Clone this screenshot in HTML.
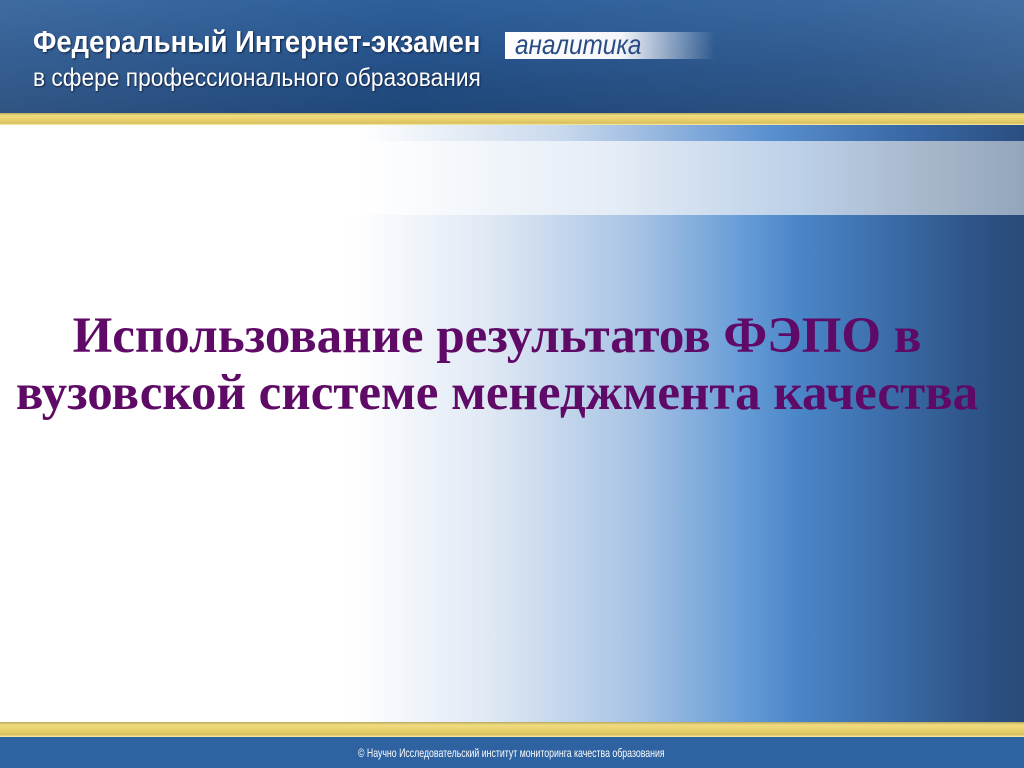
<!DOCTYPE html>
<html><head><meta charset="utf-8"><style>
body{margin:0;width:1024px;height:768px;overflow:hidden;position:relative;font-family:"Liberation Sans",sans-serif;}
div{position:absolute;}
#hdr{left:0;top:0;width:1024px;height:113px;background:linear-gradient(180deg,#2e5f9a 0%,#25528a 50%,#1e4678 100%);}
#hdr2{left:0;top:0;width:1024px;height:113px;background:linear-gradient(90deg,rgba(255,255,255,0.08),rgba(255,255,255,0) 40%,rgba(255,255,255,0.05) 80%,rgba(255,255,255,0.1));}
.yel{left:0;width:1024px;background:linear-gradient(180deg,#b8a860 0%,#f0dc80 20%,#e6ce6a 60%,#d8c060 85%,#f8f0b0 100%);}
#band{left:0;top:125px;width:1024px;height:16px;background:linear-gradient(90deg,#fff 0%,#fff 35%,#c8d8ec 55%,#5a90d0 75%,#3a6aa8 88%,#2a4e80 100%);}
#light{left:0;top:141px;width:1024px;height:74px;background:linear-gradient(90deg,#fff 0%,#fff 35%,#e4ecf6 60%,#bcd0e8 78%,#a8b8cc 90%,#94a6bc 100%);}
#main{left:0;top:215px;width:1024px;height:507px;background:linear-gradient(90deg,#fff 0%,#fff 34%,#dfe8f4 48%,#a8c4e4 62%,#6a9ed8 72%,#4a86c8 78%,#3b6ca8 87%,#2e5488 95%,#2a4a78 100%);}
#foot{left:0;top:737px;width:1024px;height:31px;background:#2e62a0;}
.t{color:#fff;white-space:nowrap;transform-origin:0 0;}
#title{left:0;width:994px;text-align:center;font-family:"Liberation Serif",serif;font-weight:bold;color:#5e0a66;font-size:51px;line-height:57px;}
</style></head><body>
<div id="hdr"></div><div id="hdr2"></div>
<div class="t" style="left:33px;top:24px;font-size:31px;font-weight:bold;transform:scaleX(0.885);text-shadow:1px 1px 2px #102040;">Федеральный Интернет-экзамен</div>
<div class="t" style="left:33px;top:64px;font-size:25px;transform:scaleX(0.91);text-shadow:1px 1px 2px #102040;">в сфере профессионального образования</div>
<div style="left:505px;top:32px;width:210px;height:27px;background:linear-gradient(90deg,#fff 0%,#f4f6fa 55%,rgba(255,255,255,0) 100%);"></div>
<div style="left:515px;top:29px;font-size:28px;font-style:italic;color:#2a4c84;transform:scaleX(0.87);transform-origin:0 0;white-space:nowrap;">аналитика</div>
<div class="yel" style="top:113px;height:12px;"></div>
<div id="band"></div><div id="light"></div><div id="main"></div>
<div class="yel" style="top:722px;height:15px;"></div>
<div id="foot"></div>
<div class="t" style="left:358px;top:746px;font-size:12px;transform:scaleX(0.73);">© Научно Исследовательский институт мониторинга качества образования</div>
<div id="title" style="top:308px;">Использование результатов ФЭПО в<br>вузовской системе менеджмента качества</div>
</body></html>
